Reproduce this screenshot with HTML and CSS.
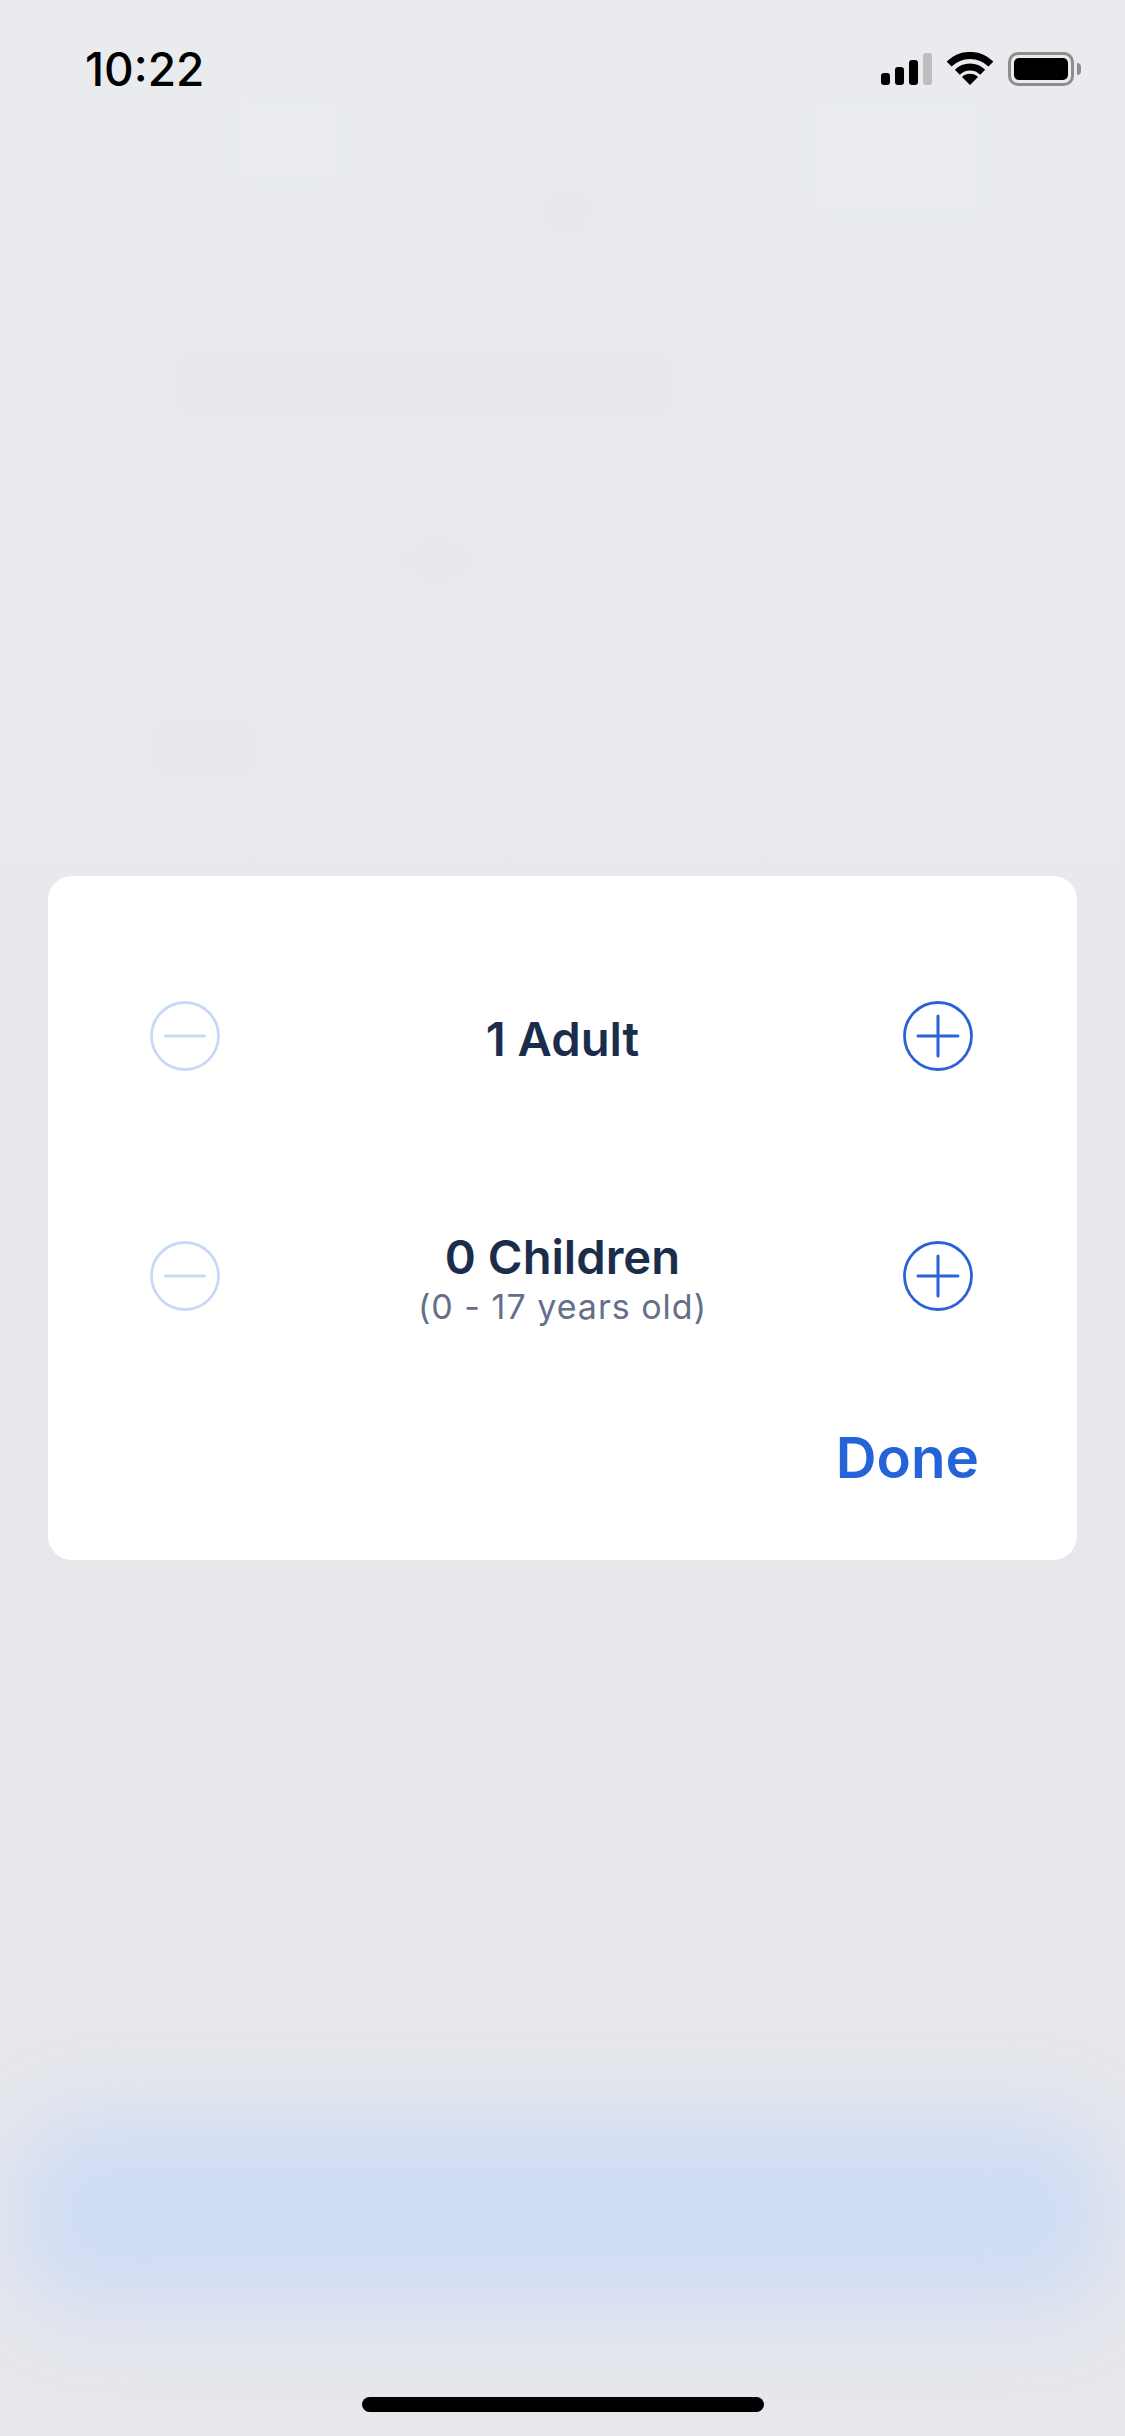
FILE: index.html
```html
<!DOCTYPE html>
<html lang="en">
<head>
<meta charset="utf-8">
<title>Travellers</title>
<link rel="stylesheet" href="styles.css">
</head>
<body>
<div class="screen">
  <svg class="ghost" viewBox="0 0 1125 900" aria-hidden="true">
    <rect class="ghost-light" x="237" y="100" width="100" height="78"/>
    <rect class="ghost-light" x="815" y="100" width="165" height="110"/>
    <path class="ghost-mid" d="M567 136 L640 150 L660 197 L653 274 L789 357 L796 405 L689 488 L681 585 L516 648 L337 657 V687 L366 716 V783 L423 798 L22 783 L79 657 L65 560 L108 463 L61 400 L75 328 L165 299 L430 289 L473 270 L473 200 L500 150 Z"/>
    <g class="ghost-dark">
      <rect x="168" y="345" width="514" height="78" rx="34"/>
      <circle cx="567" cy="211" r="28"/>
      <path d="M438 528 L492 560 L438 592 L386 560 Z"/>
      <rect x="143" y="715" width="122" height="65" rx="28"/>
    </g>
  </svg>
  <div class="glow"></div>

  <header class="status-bar">
    <span class="time">10:22</span>
    <div class="status-icons">
      <div class="signal">
        <span class="bar bar-1"></span>
        <span class="bar bar-2"></span>
        <span class="bar bar-3"></span>
        <span class="bar bar-4"></span>
      </div>
      <svg class="wifi" viewBox="0 0 46 33" aria-hidden="true">
        <path class="wifi-arc" d="M2.1 12.1 A29.5 29.5 0 0 1 43.9 12.1"/>
        <path class="wifi-arc" d="M10.3 20.3 A18 18 0 0 1 35.7 20.3"/>
        <path class="wifi-dot" d="M23 33 L15 25 A11.5 11.5 0 0 1 31 25 Z"/>
      </svg>
      <div class="battery">
        <div class="battery-body"><span class="battery-fill"></span></div>
        <span class="battery-cap"></span>
      </div>
    </div>
  </header>

  <main class="content">
    <section class="card">
      <div class="row">
        <button class="step step-off" type="button" aria-label="Remove adult">
          <svg viewBox="0 0 70 70"><circle cx="35" cy="35" r="33.5"/><path d="M15.5 35 H54.5"/></svg>
        </button>
        <div class="label">
          <div class="label-main">1 Adult</div>
        </div>
        <button class="step" type="button" aria-label="Add adult">
          <svg viewBox="0 0 70 70"><circle cx="35" cy="35" r="33.5"/><path d="M15 35 H55 M35 15 V55"/></svg>
        </button>
      </div>
      <div class="row row-second">
        <button class="step step-off" type="button" aria-label="Remove child">
          <svg viewBox="0 0 70 70"><circle cx="35" cy="35" r="33.5"/><path d="M15.5 35 H54.5"/></svg>
        </button>
        <div class="label">
          <div class="label-main">0 Children</div>
          <div class="label-sub">(0 - 17 years old)</div>
        </div>
        <button class="step" type="button" aria-label="Add child">
          <svg viewBox="0 0 70 70"><circle cx="35" cy="35" r="33.5"/><path d="M15 35 H55 M35 15 V55"/></svg>
        </button>
      </div>
      <div class="actions">
        <button class="done" type="button">Done</button>
      </div>
    </section>
  </main>

  <footer class="home-area"><span class="home-bar"></span></footer>
</div>
</body>
</html>
```

FILE: styles.css
```css
* { box-sizing: border-box; }

html, body {
  margin: 0;
  padding: 0;
}

body {
  font-family: Inter, "Liberation Sans", sans-serif;
}

.screen {
  position: relative;
  width: 1125px;
  height: 2436px;
  overflow: hidden;
  display: flex;
  flex-direction: column;
  background: linear-gradient(180deg, #e9ebef 0%, #e9ebef 25%, #e7e8ec 42%, #e7e8ec 100%);
}

/* the blurred screen behind the dialog */
.ghost {
  position: absolute;
  left: 0;
  top: 0;
  width: 1125px;
  height: 900px;
  filter: blur(2px);
}
.ghost-light { fill: #eaecf0; }
.ghost-mid { fill: #e8eaee; opacity: .7; }
.ghost-dark { fill: #e7e9ed; }

.glow {
  position: absolute;
  left: 24px;
  top: 2127px;
  width: 1077px;
  height: 173px;
  border-radius: 70px;
  background: #cfdcf4;
  box-shadow: 0 0 0 55px rgba(207, 220, 244, .22);
  filter: blur(36px);
}

.status-bar {
  position: relative;
  height: 120px;
  padding: 44px 44px 0 85px;
  display: flex;
  justify-content: space-between;
  align-items: flex-start;
}

.time {
  font-size: 46px;
  line-height: 50px;
  font-weight: 500;
  color: #000;
}

.status-icons {
  display: flex;
  align-items: flex-start;
  padding-top: 8px;
}

.signal {
  display: flex;
  align-items: flex-end;
  gap: 5px;
  height: 33px;
  width: 51px;
}
.bar {
  width: 9px;
  border-radius: 3px;
  background: #000;
}
.bar-1 { height: 12px; }
.bar-2 { height: 18px; }
.bar-3 { height: 25px; }
.bar-4 { height: 32px; background: #bdbdbd; }

.wifi {
  width: 46px;
  height: 33px;
  margin-left: 15px;
}
.wifi-arc { fill: none; stroke: #000; stroke-width: 7; }
.wifi-dot { fill: #000; }

.battery {
  display: flex;
  align-items: center;
  margin-left: 15px;
}
.battery-body {
  width: 66px;
  height: 34px;
  border: 3px solid #8e8e8e;
  border-radius: 10px;
  padding: 3px;
  display: flex;
}
.battery-fill {
  flex: 1;
  background: #000;
  border-radius: 5px;
}
.battery-cap {
  width: 4px;
  height: 12px;
  margin-left: 3px;
  background: #8e8e8e;
  border-radius: 0 4px 4px 0;
}

.content {
  position: relative;
  flex: 1;
  display: flex;
  align-items: center;
  justify-content: center;
}

.card {
  width: 1029px;
  height: 684px;
  background: #fff;
  border-radius: 24px;
  padding: 125px 104px 0 102px;
}

.row {
  display: grid;
  grid-template-columns: 70px 1fr 70px;
  grid-template-rows: 70px;
  align-items: center;
}
.row-second { margin-top: 170px; }

.step {
  width: 70px;
  height: 70px;
  padding: 0;
  border: 0;
  background: none;
  display: block;
}
.step svg {
  display: block;
  width: 70px;
  height: 70px;
  fill: none;
  stroke: #2a63d8;
  stroke-width: 2.8;
}
.step svg path { stroke-linecap: round; stroke-width: 3; }
.step-off svg { stroke: #c8d9f6; }

.label {
  text-align: center;
  padding: 6px 0 0 2px;
}
.label-main {
  font-size: 47.2px;
  line-height: 54px;
  font-weight: 600;
  color: #1c2d4c;
}
.label-sub {
  font-size: 34px;
  line-height: 45px;
  font-weight: 400;
  letter-spacing: 1px;
  color: #64708a;
}

.actions {
  display: flex;
  justify-content: flex-end;
  margin-top: 113px;
  margin-right: -6px;
}
.done {
  padding: 0;
  border: 0;
  background: none;
  font-family: inherit;
  font-size: 56.5px;
  line-height: 68px;
  font-weight: 600;
  color: #2563d9;
}

.home-area {
  position: relative;
  height: 120px;
  padding-bottom: 24px;
  display: flex;
  justify-content: center;
  align-items: flex-end;
}
.home-bar {
  width: 402px;
  height: 15px;
  border-radius: 8px;
  background: #000;
}
```
